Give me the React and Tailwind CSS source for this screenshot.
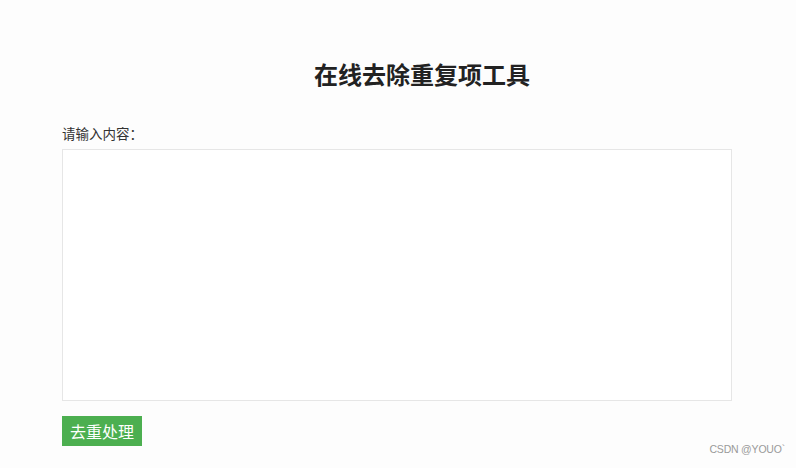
export default function App() {
  return (
    <div
      className="relative min-h-[468px] w-full bg-[#fdfdfd] text-[#333]"
      style={{ fontFamily: '"Noto Sans CJK SC", "Liberation Sans", sans-serif' }}
    >
      <div className="px-[62px] pt-[56px]">
        <h1 className="pl-[48px] text-center text-[24px] font-bold leading-[36px] text-[#222]">
          在线去除重复项工具
        </h1>

        <label className="mt-[31px] block text-[13.5px] leading-[20px] text-[#333]">
          请输入内容：
        </label>
        <textarea className="mt-[6px] block h-[252px] w-[670px] resize-none border border-[#e6e6e6] bg-white outline-none" />

        <button className="mt-[15px] h-[30px] w-[80px] bg-[#4caf50] text-[16px] leading-[30px] text-white">
          去重处理
        </button>
      </div>

      <div
        className="absolute bottom-[10px] right-[11px] text-[10.5px] tracking-[-0.2px] text-[#9a9a9a]"
        style={{ fontFamily: '"Liberation Sans", sans-serif' }}
      >
        CSDN @YOUO`
      </div>
    </div>
  );
}
